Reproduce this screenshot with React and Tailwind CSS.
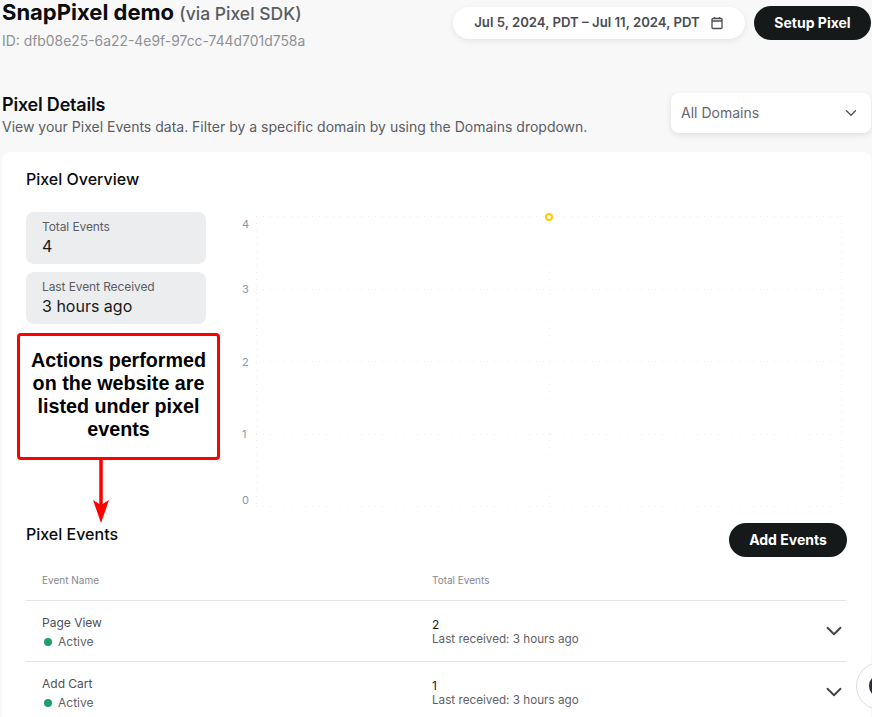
import { ChevronDown } from "lucide-react";

const font = { fontFamily: "Inter, sans-serif" };

function StatCard({ label, value }) {
  return (
    <div className="h-[52px] rounded-lg bg-[#ecedef] px-4 pt-2">
      <p className="text-[12px] leading-[14px] tracking-[-0.1px] text-[#5b5d63]">{label}</p>
      <p className="mt-[2px] text-[16px] leading-[20px] text-[#16191c]">{value}</p>
    </div>
  );
}

function Chart() {
  const rows = [
    { label: "4", y: 9.5, ly: 21 },
    { label: "3", y: 82.5, ly: 86 },
    { label: "2", y: 154.5, ly: 159 },
    { label: "1", y: 227.5, ly: 231 },
    { label: "0", y: 299.5, ly: 297 },
  ];
  return (
    <svg width="610" height="310" className="block shrink-0">
      {rows.map((r) => (
        <g key={r.label}>
          <line x1="20" x2="605" y1={r.y} y2={r.y} stroke="#ececee" strokeDasharray="1 6" />
          <text x="6" y={r.ly} fontSize="11" fill="#8b95a7" fontFamily="Inter, sans-serif">
            {r.label}
          </text>
        </g>
      ))}
      {[20.5, 313.5, 605.5].map((x) => (
        <line key={x} x1={x} x2={x} y1="9" y2="299" stroke="#ececee" strokeDasharray="1 6" />
      ))}
      <circle cx="313" cy="10" r="3" fill="#fff" stroke="#ffcc00" strokeWidth="2" />
    </svg>
  );
}

function EventRow({ name, total }) {
  return (
    <div className="mr-[1px] flex h-[61px] items-center border-t border-[#e3e4e7]">
      <div className="w-[406px] pl-4 pt-[3px]">
        <p className="text-[12px] leading-[16px] text-[#4d4f55]">{name}</p>
        <div className="mt-[3px] flex items-center gap-[6px] pl-[2px] text-[12px] leading-[16px] text-[#5f6167]">
          <span className="size-2 rounded-full bg-[#1f9d6b]" />
          Active
        </div>
      </div>
      <div className="flex-1 pt-[2px]">
        <p className="text-[12px] leading-[14px] text-[#16191c]">{total}</p>
        <p className="text-[11.7px] leading-[15px] text-[#5f6167]">Last received: 3 hours ago</p>
      </div>
      <ChevronDown className="-mr-[1px] size-[26px] text-[#3f4146]" strokeWidth={1.7} />
    </div>
  );
}

export default function App() {
  return (
    <div
      className="relative h-[717px] w-[872px] overflow-hidden bg-[#f8f8f9] pl-[2px] pr-[1px]"
      style={font}
    >
      {/* Header */}
      <div className="flex h-[93px] items-start justify-between">
        <div>
          <h1 className="-mt-[1px] text-[22px] leading-[26px] font-bold text-[#0b0c0e]">
            SnapPixel demo{" "}
            <span className="text-[17.5px] font-medium text-[#5b5d63]">(via Pixel SDK)</span>
          </h1>
          <p className="mt-[5px] text-[13.9px] leading-[18px] text-[#8f9196]">
            ID: dfb08e25-6a22-4e9f-97cc-744d701d758a
          </p>
        </div>
        <div className="mt-[6px] flex items-center gap-[9px]">
          <button className="flex h-[32px] w-[292px] items-center justify-center gap-[10px] rounded-full bg-white text-[13.2px] font-semibold text-[#4a4c52] shadow-[0_2px_6px_rgba(0,0,0,0.08)]">
            Jul 5, 2024, PDT – Jul 11, 2024, PDT
            <svg width="14" height="14" viewBox="0 0 14 14" fill="none" stroke="#4a4c52" strokeWidth="1.3">
              <rect x="2" y="2.5" width="10" height="10" rx="1" />
              <path d="M2 5h10M4.5 1v2M9.5 1v2" />
            </svg>
          </button>
          <button className="h-[34px] w-[117px] rounded-full bg-[#16191a] pb-[1px] text-[14px] font-bold text-white">
            Setup Pixel
          </button>
        </div>
      </div>

      {/* Pixel Details */}
      <div className="flex h-[59px] items-start justify-between">
        <div className="pt-[1px]">
          <h2 className="text-[18px] leading-[22px] font-semibold tracking-[-0.2px] text-[#0b0c0e]">Pixel Details</h2>
          <p className="mt-[2px] text-[14px] leading-[18px] text-[#5b5d63]">
            View your Pixel Events data. Filter by a specific domain by using the Domains dropdown.
          </p>
        </div>
        <div className="flex h-[40px] w-[200px] items-center justify-between rounded-lg bg-white pb-[1px] pl-[10px] pr-[11px] text-[14px] text-[#65676d] shadow-[0_2px_6px_rgba(0,0,0,0.1)]">
          All Domains
          <ChevronDown className="size-[18px] text-[#4a4c52]" strokeWidth={1.6} />
        </div>
      </div>

      {/* Card */}
      <div className="rounded-lg bg-white pl-6 pr-6 pt-[17px]">
        <h3 className="text-[16px] leading-[20px] font-medium text-[#0b0c0e]">Pixel Overview</h3>
        <div className="mt-[23px] flex gap-[30px]">
          <div className="flex w-[180px] shrink-0 flex-col gap-2">
            <StatCard label="Total Events" value="4" />
            <StatCard label="Last Event Received" value="3 hours ago" />
          </div>
          <div className="-mt-[5px]">
            <Chart />
          </div>
        </div>

        <div className="mt-[6px] flex items-start justify-between">
          <h3 className="pt-[1px] text-[16px] leading-[20px] font-medium text-[#0b0c0e]">Pixel Events</h3>
          <button className="h-[34px] w-[118px] rounded-full bg-[#16191a] pb-[1px] text-[14px] font-bold text-white">
            Add Events
          </button>
        </div>

        <div className="mt-[4px] flex h-[39px] items-center text-[10px] text-[#85878d]">
          <span className="w-[406px] pl-4">Event Name</span>
          <span>Total Events</span>
        </div>
        <EventRow name="Page View" total="2" />
        <EventRow name="Add Cart" total="1" />
      </div>

      {/* Annotation */}
      <div
        className="absolute left-[17px] top-[333px] flex h-[127px] w-[203px] items-center justify-center rounded-[4px] border-[3px] border-[#ff0000] bg-white px-2 pb-1 text-center text-[19.7px] leading-[23px] font-bold text-black"
        style={{ fontFamily: '"Liberation Sans", sans-serif' }}
      >
        Actions performed on the website are listed under pixel events
      </div>
      <svg className="absolute left-[90px] top-[460px]" width="22" height="64" viewBox="0 0 22 64">
        <path d="M11 0v48" stroke="#ff0000" strokeWidth="3.5" fill="none" />
        <path d="M3 40 L11 45 L19 40 L11 63 Z" fill="#ff0000" />
      </svg>

      {/* Help bubble */}
      <div className="absolute left-[856px] top-[662px] flex size-[48px] items-center rounded-full border border-[#dddee1] bg-white pl-[12px]">
        <span className="size-[24px] shrink-0 rounded-full bg-[#2b2d31]" />
      </div>
    </div>
  );
}
